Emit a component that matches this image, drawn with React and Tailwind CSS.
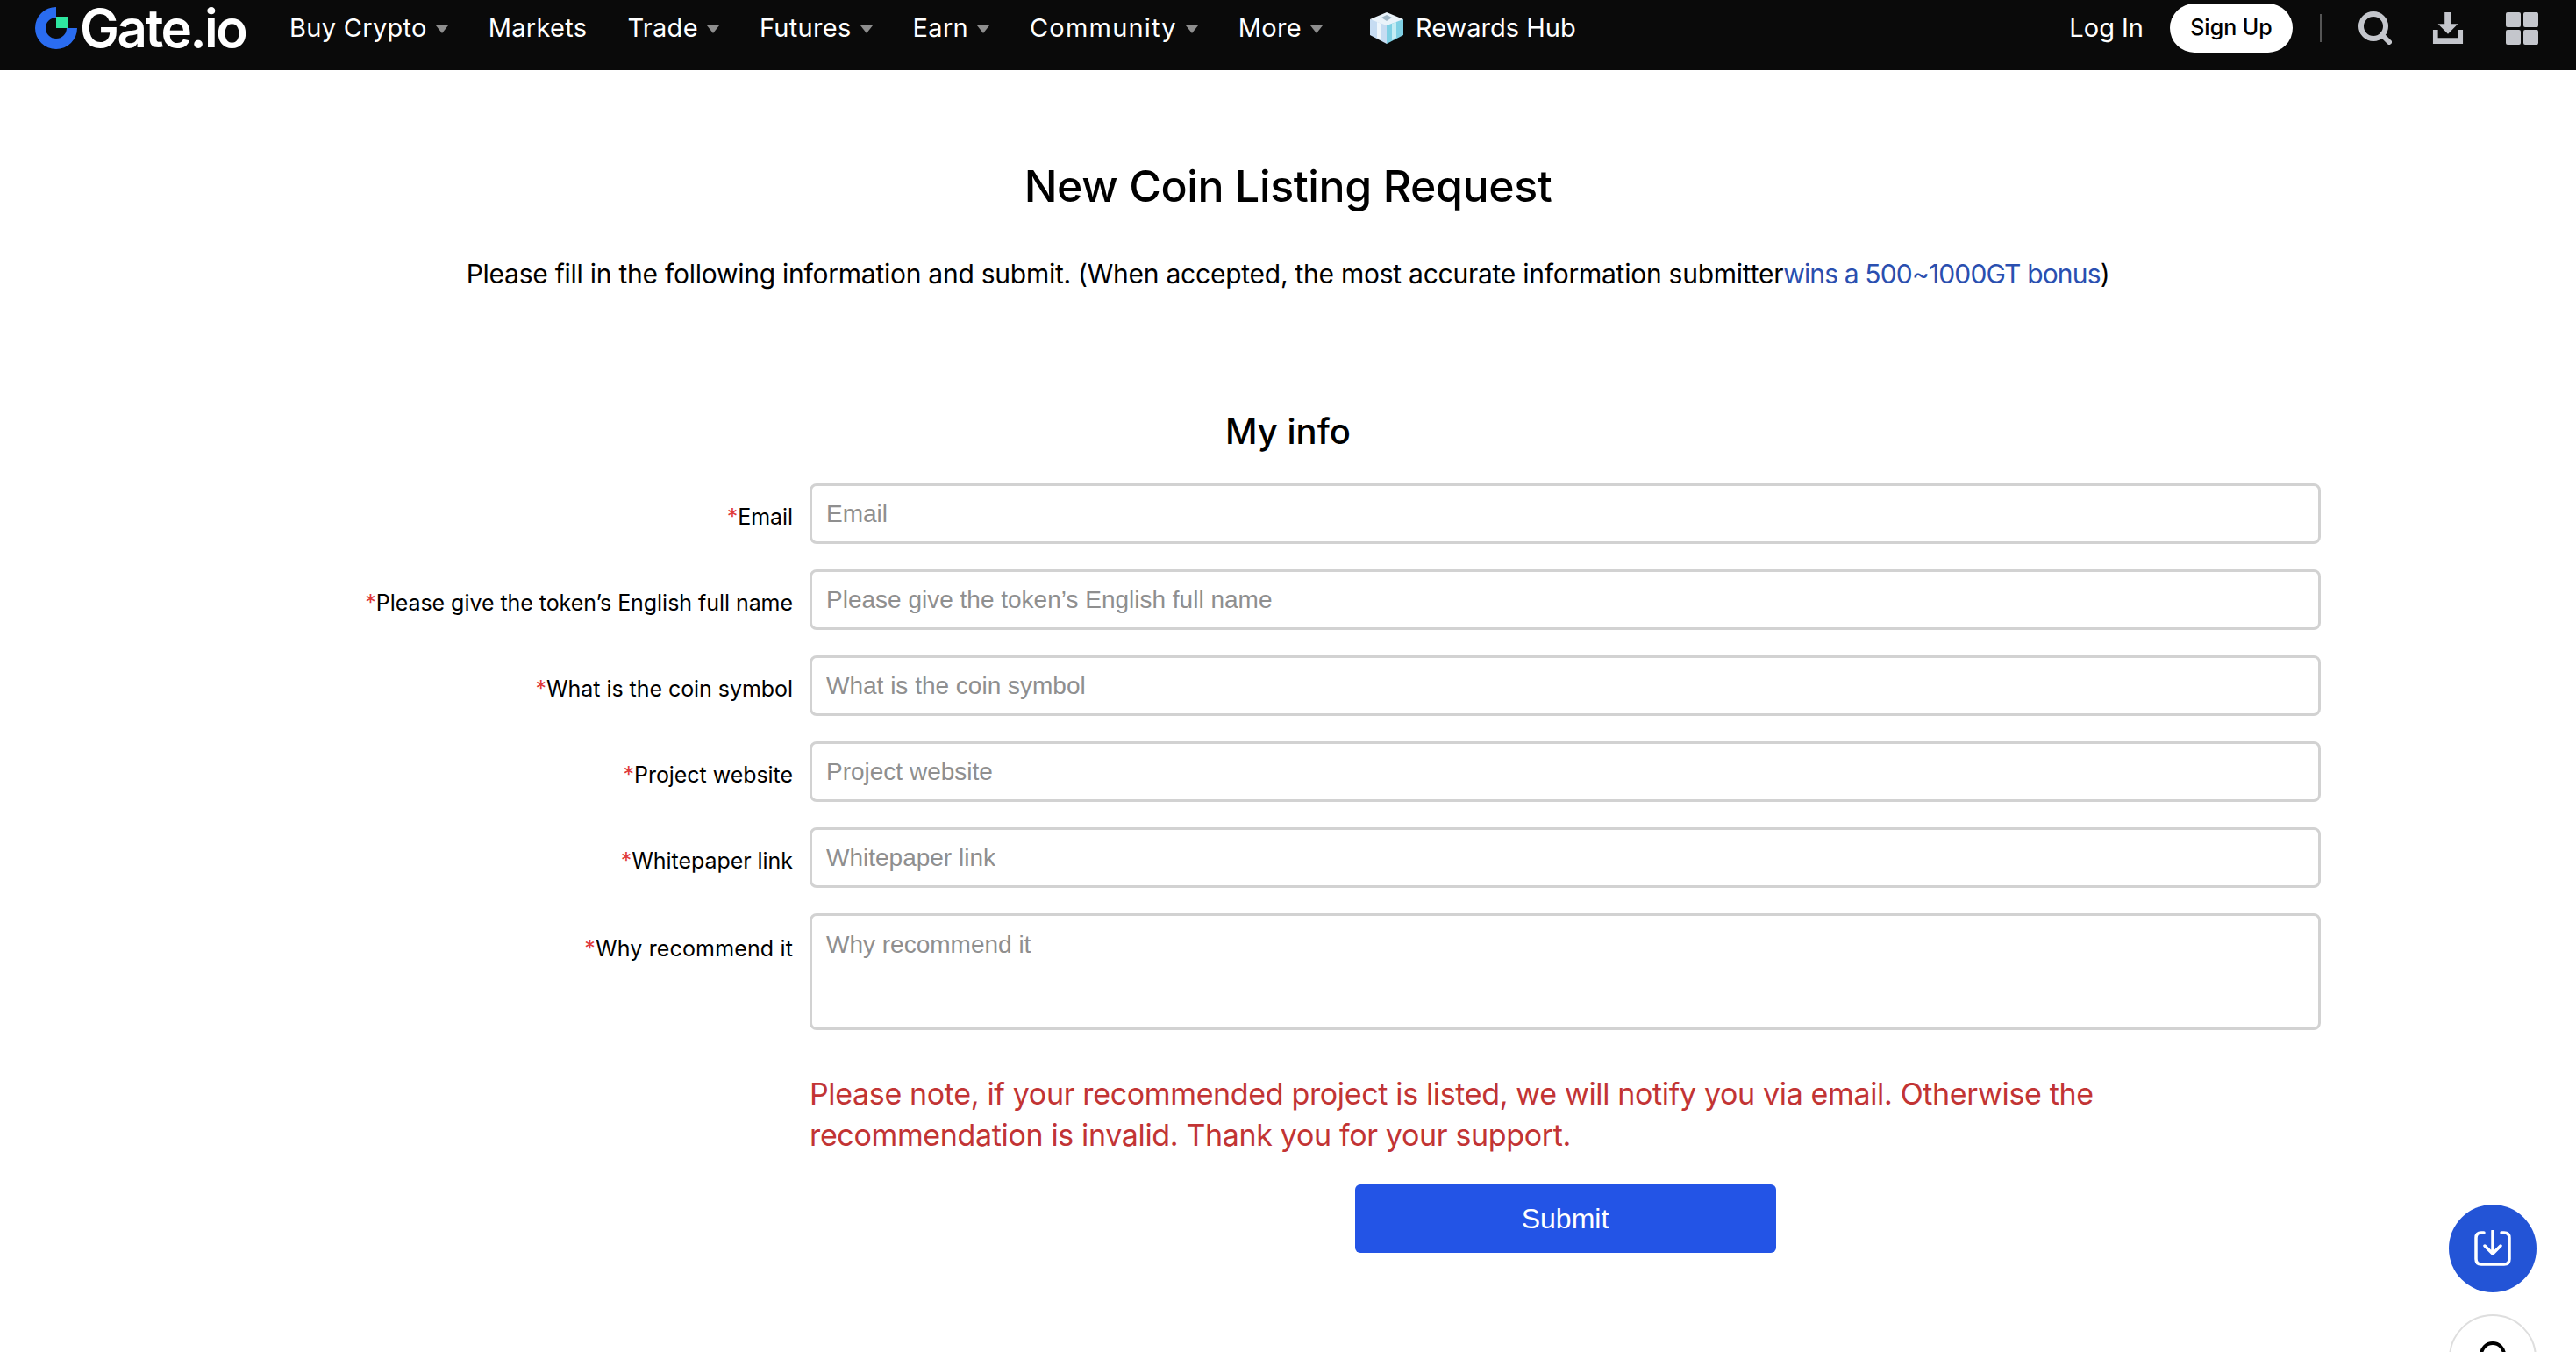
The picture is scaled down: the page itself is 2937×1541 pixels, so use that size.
const POP = "font-['Inter','Noto_Sans',sans-serif]";

const NAV = [
  {label: 'Buy Crypto', caret: true},
  {label: 'Markets'},
  {label: 'Trade', caret: true},
  {label: 'Futures', caret: true},
  {label: 'Earn', caret: true},
  {label: 'Community', caret: true, wide: true},
  {label: 'More', caret: true},
];

const FIELDS = [
  {label: 'Email'},
  {label: 'Please give the token’s English full name'},
  {label: 'What is the coin symbol'},
  {label: 'Project website'},
  {label: 'Whitepaper link'},
];

function GateLogo() {
  return (
    <svg width="48" height="48" viewBox="0 0 48 48" className="shrink-0">
      <path d="M24 0 A24 24 0 1 0 48 24 L36 24 A12 12 0 1 1 24 12 Z" fill="#2a6cf0" />
      <rect x="24" y="11" width="13" height="13" fill="#2ee6a0" />
    </svg>
  );
}

function GiftIcon() {
  return (
    <svg width="40" height="36" viewBox="0 0 40 36" className="shrink-0">
      <path d="M20 12 L39 8 L39 26 L20 36 Z" fill="#7fd0e4" />
      <path d="M20 12 L1 8 L1 26 L20 36 Z" fill="#c6dcf2" />
      <path d="M20 0 L39 8 L20 15 L1 8 Z" fill="#eaf3fa" />
      <path d="M14 6 L20 3 L26 6 L20 10 Z" fill="#9fb6c6" />
      <path d="M9 11 L14 13 L14 32 L9 29 Z" fill="#eef6fc" />
      <path d="M26 13 L31 11 L31 29 L26 32 Z" fill="#c4ecf4" />
    </svg>
  );
}

function Caret() {
  return <span className="w-0 h-0 border-x-[7px] border-x-transparent border-t-[9px] border-t-[#8e8e8e] mt-[3px]" />;
}

function Header() {
  return (
    <header className={`h-20 bg-[#0a0a0a] flex items-start pt-[6px] pl-[40px] pr-[43px] text-white ${POP}`}>
      <div className="h-[52px] flex items-center gap-[3px] w-[290px] shrink-0">
        <GateLogo />
        <span className="text-[60px] font-semibold tracking-[-2.5px] leading-[52px]">Gate.io</span>
      </div>
      <nav className="h-[52px] flex items-center gap-[46px] text-[29px] tracking-[0.3px]">
        {NAV.map((item) => (
          <div key={item.label} className="flex items-center gap-[10px]">
            <span className={item.wide ? 'tracking-[1.2px]' : ''}>{item.label}</span>
            {item.caret && <Caret />}
          </div>
        ))}
        <div className="flex items-center gap-[13px] ml-[7px] tracking-normal">
          <GiftIcon />
          <span>Rewards Hub</span>
        </div>
      </nav>
      <div className="ml-auto h-[52px] flex items-center">
        <span className="text-[29px]">Log In</span>
        <button className="ml-[30px] w-[140px] h-[56px] rounded-full bg-white text-black text-[25px] font-medium">Sign Up</button>
        <span className="ml-[31px] w-[2px] h-[32px] bg-[#555555]" />
        <svg width="38" height="38" viewBox="0 0 38 38" className="ml-[42px]" fill="none" stroke="#c4c6cc" strokeWidth="6" strokeLinecap="round">
          <circle cx="17" cy="17" r="14" />
          <path d="M27 27 L35 35" />
        </svg>
        <svg width="36" height="36" viewBox="0 0 38 38" className="ml-[46px]" fill="#c4c6cc">
          <path d="M15 0 H23 V14 H31 L19 26 L7 14 H15 Z" />
          <path d="M1 21 H7 V31 H31 V21 H37 V38 H1 Z" />
        </svg>
        <div className="ml-[48px] grid grid-cols-2 gap-[3px] w-[37px]">
          <span className="h-[17px] rounded-[2px] bg-[#c4c6cc]" />
          <span className="h-[17px] rounded-[2px] bg-[#c4c6cc]" />
          <span className="h-[17px] rounded-[2px] bg-[#c4c6cc]" />
          <span className="h-[17px] rounded-[2px] bg-[#c4c6cc]" />
        </div>
      </div>
    </header>
  );
}

function Label({children, className}) {
  return (
    <div className={`w-[613px] shrink-0 text-right text-[25px] tracking-[-0.05px] text-black ${POP} ${className}`}>
      <span className="text-[#e03a3a]">*</span>
      {children}
    </div>
  );
}

const BOX = "w-full border-[3px] border-[#d2d2d2] rounded-[8px] px-[16px] text-[28px] text-black outline-none placeholder:text-[#8f8f8f] font-['Liberation_Sans',Arial,sans-serif]";

function Field({label}) {
  return (
    <div className="flex items-center gap-[19px] h-[69px]">
      <Label className="pt-[8px]">{label}</Label>
      <input className={`${BOX} h-[69px]`} placeholder={label} readOnly />
    </div>
  );
}

export default function App() {
  return (
    <div className="relative h-[1541px] overflow-hidden bg-white">
      <Header />
      <main className={`${POP} text-black`}>
        <h1 className="mt-[100px] text-center text-[50px] leading-[64px] font-medium tracking-[-0.4px]">New Coin Listing Request</h1>
        <p className="mt-[48px] text-center text-[30px] leading-[40px] tracking-[-0.25px]">
          Please fill in the following information and submit. (When accepted, the most accurate information submitter
          <span className="text-[#2a4fb0] tracking-[-0.85px]">wins a 500~1000GT bonus</span>)
        </p>
        <h2 className="mt-[132px] text-center text-[40px] leading-[56px] font-medium">My info</h2>
        <form className="mx-auto w-[2355px] mt-[31px]">
          <div className="flex flex-col gap-[29px]">
            {FIELDS.map((field) => (
              <Field key={field.label} label={field.label} />
            ))}
            <div className="flex items-start gap-[19px]">
              <Label className="pt-[22px] tracking-[0.15px]">Why recommend it</Label>
              <textarea className={`${BOX} h-[133px] py-[12px] resize-none`} placeholder="Why recommend it" readOnly />
            </div>
          </div>
          <div className="ml-[632px]">
            <p className="mt-[49px] text-[34px] leading-[47px] tracking-[-0.35px] text-[#c23434] w-[1600px]">
              Please note, if your recommended project is listed, we will notify you via email. Otherwise the recommendation is invalid. Thank you for your support.
            </p>
            <div className="mt-[33px] flex justify-center">
              <button type="button" className="w-[480px] h-[78px] bg-[#2354e6] rounded-[6px] text-white text-[32px] font-['Liberation_Sans',Arial,sans-serif]">Submit</button>
            </div>
          </div>
        </form>
      </main>
      <div className="absolute left-[2792px] top-[1373px] w-[100px] h-[100px] rounded-full bg-[#2354d6] flex items-center justify-center">
        <svg width="42" height="42" viewBox="0 0 42 42" fill="none" stroke="white" strokeWidth="3.5" strokeLinecap="round" strokeLinejoin="round">
          <path d="M11 3 H8 Q2 3 2 9 V33 Q2 39 8 39 H34 Q40 39 40 33 V9 Q40 3 34 3 H31" />
          <path d="M21 1 V26 M12 18 L21 27 L30 18" />
        </svg>
      </div>
      <div className="absolute left-[2792px] top-[1498px] w-[100px] h-[100px] rounded-full border-[2px] border-[#dedede] bg-white flex items-start justify-center pt-[29px]">
        <span className="w-[30px] h-[30px] rounded-full border-[4px] border-black" />
      </div>
    </div>
  );
}
